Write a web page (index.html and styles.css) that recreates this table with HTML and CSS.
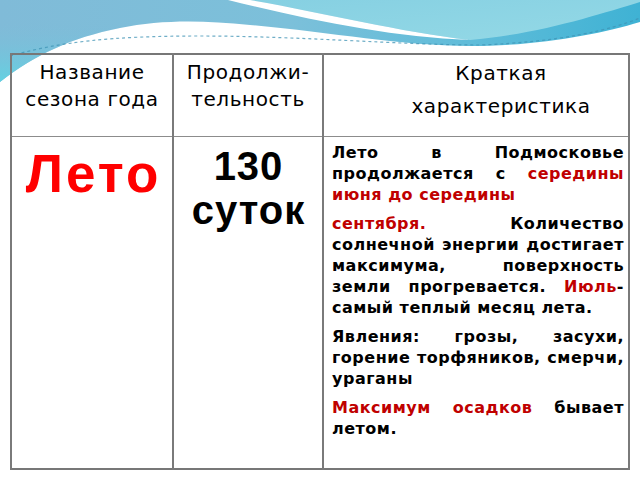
FILE: index.html
```html
<!DOCTYPE html>
<html lang="ru">
<head>
<meta charset="utf-8">
<title>Лето</title>
<link rel="stylesheet" href="styles.css">
</head>
<body>
<div class="slide">
  <svg class="deco" width="640" height="90" viewBox="0 0 640 90" aria-hidden="true">
    <defs>
      <linearGradient id="gBlue" x1="0" y1="0" x2="1" y2="0">
        <stop offset="0" stop-color="#80bbd8"/>
        <stop offset="0.45" stop-color="#7cc0da"/>
        <stop offset="0.75" stop-color="#5ebcd9"/>
        <stop offset="1" stop-color="#3fb2d4"/>
      </linearGradient>
      <linearGradient id="gLeft" x1="0" y1="0" x2="0" y2="1">
        <stop offset="0" stop-color="#80bbd8" stop-opacity="0"/>
        <stop offset="1" stop-color="#62d2e2"/>
      </linearGradient>
      <linearGradient id="gCyan" x1="0" y1="0" x2="1" y2="1">
        <stop offset="0" stop-color="#86d0e2"/>
        <stop offset="1" stop-color="#94d9e6"/>
      </linearGradient>
    </defs>
    <path d="M0,0 H640 V22 C600,34 540,46 470,46 C400,46 330,32 250,25 C200,20 160,20 120,28 C70,38 35,55 0,82 Z" fill="url(#gBlue)"/>
    <path d="M0,20 H120 V28 C70,38 35,55 0,82 Z" fill="url(#gLeft)"/>
    <path d="M250,0 H640 V2 C600,14 540,34 470,40 C400,32 320,12 250,0 Z" fill="url(#gCyan)"/>
    <path d="M228,0 H250 C320,12 400,32 470,40 C390,37 310,20 228,0 Z" fill="#ffffff"/>
    <path d="M10,56 C60,42 110,36 200,36 C300,36 400,45 480,45 C560,42 610,30 640,18" fill="none" stroke="#3f93b4" stroke-width="1.2" stroke-dasharray="3 3" opacity="0.75"/>
  </svg>

  <table class="season-table">
    <colgroup>
      <col class="c-name">
      <col class="c-dur">
      <col class="c-desc">
    </colgroup>
    <tr class="head-row">
      <th class="h-cell">Название<br>сезона года</th>
      <th class="h-cell">Продолжи-<br>тельность</th>
      <th class="h-cell h-desc">Краткая<br>характеристика</th>
    </tr>
    <tr class="body-row">
      <td class="season">Лето</td>
      <td class="duration">130<br>суток</td>
      <td class="desc">
        <p>Лето в Подмосковье продолжается с <span class="hl">середины июня до середины</span></p>
        <p><span class="hl">сентября.</span> Количество солнечной энергии достигает максимума, поверхность земли прогревается. <span class="hl">Июль</span>-самый теплый месяц лета.</p>
        <p>Явления: грозы, засухи, горение торфяников, смерчи, ураганы</p>
        <p><span class="hl">Максимум осадков</span> бывает летом.</p>
      </td>
    </tr>
  </table>
</div>
</body>
</html>
```

FILE: styles.css
```css
html, body {
  margin: 0;
  padding: 0;
  background: #ffffff;
}

.slide {
  position: relative;
  width: 640px;
  height: 480px;
  overflow: hidden;
  background: #ffffff;
  font-family: "Liberation Sans", Arial, sans-serif;
  color: #000000;
}

.deco {
  position: absolute;
  left: 0;
  top: 0;
  z-index: 0;
}

.season-table {
  position: relative;
  z-index: 1;
  margin: 53px 0 0 10px;
  width: 618px;
  height: 417px;
  border-collapse: collapse;
  table-layout: fixed;
  border: 2px solid #777777;
}

.c-name { width: 162px; }
.c-dur { width: 150px; }
.c-desc { width: 306px; }

.season-table th,
.season-table td {
  border-left: 2px solid #7a7a7a;
  border-right: 2px solid #7a7a7a;
  vertical-align: top;
}

.head-row {
  height: 82px;
}

.head-row th {
  border-bottom: 1px solid #8c8c8c;
}

.h-cell {
  font-family: "DejaVu Sans", "Liberation Sans", sans-serif;
  font-weight: normal;
  font-size: 20px;
  line-height: 27px;
  letter-spacing: 0.6px;
  text-align: center;
  padding: 4px 0 0 0;
}

.h-desc {
  line-height: 33px;
  padding: 2px 0 0 50px;
}

.season {
  color: #ff0000;
  font-weight: bold;
  font-size: 53px;
  line-height: 52px;
  letter-spacing: 3px;
  text-align: center;
  padding: 11px 0 0 3px;
}

.duration {
  font-weight: bold;
  font-size: 40px;
  line-height: 44px;
  letter-spacing: 1px;
  text-align: center;
  padding: 7px 0 0 1px;
}

.desc {
  font-family: "DejaVu Sans", "Liberation Sans", sans-serif;
  font-weight: bold;
  font-size: 16px;
  line-height: 21px;
  letter-spacing: 0.5px;
  text-align: justify;
  padding: 5px 4px 0 8px;
}

.desc p {
  margin: 0 0 8px 0;
}

.hl {
  color: #c00000;
}
```
